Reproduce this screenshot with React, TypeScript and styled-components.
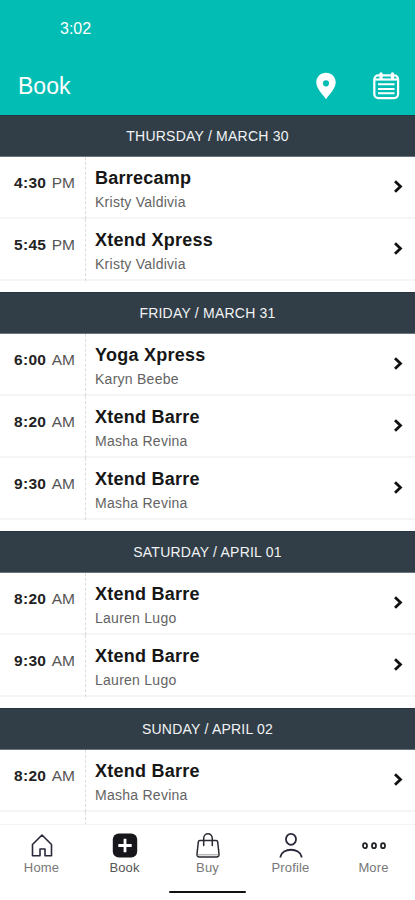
import React from "react";
import styled, {createGlobalStyle} from "styled-components";

interface IClass {
    time: string,
    period: string,
    title: string,
    instructor: string
}

interface IDay {
    label: string,
    classes: IClass[],
    hasMore?: boolean
}

const days: IDay[] = [
    {
        label: "THURSDAY / MARCH 30",
        classes: [
            {time: "4:30", period: "PM", title: "Barrecamp", instructor: "Kristy Valdivia"},
            {time: "5:45", period: "PM", title: "Xtend Xpress", instructor: "Kristy Valdivia"},
        ]
    },
    {
        label: "FRIDAY / MARCH 31",
        classes: [
            {time: "6:00", period: "AM", title: "Yoga Xpress", instructor: "Karyn Beebe"},
            {time: "8:20", period: "AM", title: "Xtend Barre", instructor: "Masha Revina"},
            {time: "9:30", period: "AM", title: "Xtend Barre", instructor: "Masha Revina"},
        ]
    },
    {
        label: "SATURDAY / APRIL 01",
        classes: [
            {time: "8:20", period: "AM", title: "Xtend Barre", instructor: "Lauren Lugo"},
            {time: "9:30", period: "AM", title: "Xtend Barre", instructor: "Lauren Lugo"},
        ]
    },
    {
        label: "SUNDAY / APRIL 02",
        classes: [
            {time: "8:20", period: "AM", title: "Xtend Barre", instructor: "Masha Revina"},
        ],
        hasMore: true
    },
];

const GlobalStyle = createGlobalStyle`
  * {
    box-sizing: border-box;
  }

  body {
    margin: 0;
    background: #fff;
    font-family: "Liberation Sans", Arial, sans-serif;
  }
`;

const Screen = styled.div`
  width: 100%;
  height: 900px;
  display: flex;
  flex-direction: column;
  overflow: hidden;
`;

const Header = styled.header`
  flex: none;
  height: 115px;
  background: #02bdb4;
  color: #fff;
`;

const StatusBar = styled.div`
  height: 56px;
  padding: 20px 0 0 60px;
  font-size: 16px;
  line-height: 18px;
`;

const TitleBar = styled.div`
  height: 59px;
  padding: 0 15px 0 18px;
  display: flex;
  align-items: center;
`;

const Title = styled.h1`
  flex: 1;
  margin: 0;
  font-size: 23px;
  font-weight: 400;
  line-height: 26px;
`;

const HeaderIcons = styled.div`
  display: flex;
  gap: 36px;
  align-items: center;

  svg {
    display: block;
  }
`;

const Schedule = styled.main`
  flex: 1;
  min-height: 0;
  overflow: hidden;
`;

const Day = styled.section`
  margin-bottom: 11px;
`;

const DayLabel = styled.h2`
  height: 42px;
  margin: 0;
  background: #313e48;
  border-top: 1px solid #253543;
  border-bottom: 1px solid #6b747c;
  color: #f1f3f5;
  font-size: 14px;
  font-weight: 400;
  letter-spacing: 0.22px;
  line-height: 40px;
  text-align: center;
`;

const Row = styled.div`
  height: 62px;
  display: flex;
  border-bottom: 2px solid #f5f5f5;
`;

const Time = styled.div`
  width: 86px;
  height: 62px;
  padding: 16px 10px 0 14px;
  display: flex;
  justify-content: space-between;
  border-right: 1px dashed #dcdcdc;
  color: #555;
  font-size: 15.5px;
  line-height: 20px;

  b {
    color: #222;
    letter-spacing: 0.3px;
  }
`;

const Details = styled.div`
  flex: 1;
  padding: 10px 0 0 9px;
`;

const ClassName = styled.div`
  color: #161616;
  font-size: 18px;
  font-weight: 700;
  letter-spacing: 0.25px;
  line-height: 22px;
`;

const Instructor = styled.div`
  margin-top: 5px;
  color: #636363;
  font-size: 14px;
  letter-spacing: 0.26px;
  line-height: 16px;
`;

const Chevron = styled.svg`
  width: 10px;
  height: 14px;
  margin: 22px 12px 0 0;
`;

const TabBar = styled.nav`
  flex: none;
  height: 58px;
  display: grid;
  grid-template-columns: repeat(5, 1fr);
  border-top: 1px solid #f4f4f4;
  background: #fff;
`;

const Tab = styled.div<{ $active?: boolean }>`
  display: flex;
  flex-direction: column;
  align-items: center;
  padding-top: 6px;
  color: ${props => props.$active ? "#555" : "#777"};
  font-size: 13px;
  letter-spacing: 0.15px;
  line-height: 15px;

  svg {
    display: block;
    margin-bottom: 1px;
  }
`;

const HomeIndicator = styled.div`
  flex: none;
  width: 77px;
  height: 2px;
  margin: 9px auto 7px;
  border-radius: 1px;
  background: #111;
`;

const PinIcon = () => (
    <svg width="20" height="28" viewBox="0 0 20 28">
        <path fill="#fff" fillRule="evenodd"
              d="M10 .8C4.500 .8 .3 5 .3 10.300C.3 16.500 6 21.500 10 27.200C14 21.500 19.700 16.500 19.700 10.300C19.700 5 15.500 .8 10 .8ZM10 8.200A3.100 3.100 0 1 1 10 14.400A3.100 3.100 0 1 1 10 8.200Z"/>
    </svg>
);

const CalendarIcon = () => (
    <svg width="28" height="28" viewBox="0 0 28 28" fill="none" stroke="#fff" strokeWidth="2.200">
        <rect x="2.300" y="3.300" width="23.800" height="22.800" rx="4"/>
        <path d="M2 7.500H26" strokeWidth="2.200"/>
        <path d="M9 2V5.500M20.500 2V5.500" strokeWidth="3.400" strokeLinecap="round"/>
        <path d="M6 12.300H22.500M6 17H22.500M6 21.300H22.500" strokeWidth="2"/>
    </svg>
);

const HomeIcon = () => (
    <svg width="26" height="28" viewBox="0 0 26 28" fill="none" stroke="#29293b" strokeWidth="1.600">
        <path d="M3.500 13.500L13 4L22.500 13.500V24.700H16V18H11V24.700H3.500Z" strokeLinejoin="round"/>
    </svg>
);

const BookIcon = () => (
    <svg width="26" height="28" viewBox="0 0 26 28">
        <rect x="0.800" y="2.500" width="24.400" height="24" rx="6" fill="#17171b"/>
        <path d="M13 7.800V21.200M6.300 14.500H19.700" stroke="#fff" strokeWidth="2.800"/>
    </svg>
);

const BuyIcon = () => (
    <svg width="26" height="28" viewBox="0 0 26 28" fill="none" stroke="#29292f" strokeWidth="1.500">
        <path d="M4.800 9.500H21.200C22 9.500 22.500 10 22.700 11L24 23C24.200 25 23.200 26 21.500 26H4.500C2.800 26 1.800 25 2 23L3.300 11C3.500 10 4 9.500 4.800 9.500Z"/>
        <path d="M2.500 23.800H23.500" strokeWidth="1" stroke="#999"/>
        <path d="M8.700 14.500V7.500C8.700 1.300 17.300 1.300 17.300 7.500V14.500" strokeLinecap="round"/>
    </svg>
);

const ProfileIcon = () => (
    <svg width="26" height="28" viewBox="0 0 26 28" fill="none" stroke="#29293b" strokeWidth="1.800">
        <ellipse cx="13" cy="8.300" rx="5" ry="5.500"/>
        <path d="M2.500 26.500V25.500C4 16.500 22 16.500 23.500 25.500V26.500"/>
    </svg>
);

const MoreIcon = () => (
    <svg width="26" height="28" viewBox="0 0 26 28" fill="none" stroke="#222228" strokeWidth="1.800">
        <ellipse cx="4" cy="14.700" rx="2" ry="2.500"/>
        <ellipse cx="13" cy="14.700" rx="2" ry="2.500"/>
        <ellipse cx="22" cy="14.700" rx="2" ry="2.500"/>
    </svg>
);

const tabs = [
    {label: "Home", icon: <HomeIcon/>},
    {label: "Book", icon: <BookIcon/>, active: true},
    {label: "Buy", icon: <BuyIcon/>},
    {label: "Profile", icon: <ProfileIcon/>},
    {label: "More", icon: <MoreIcon/>},
];

const ClassRow = (props: IClass) => (
    <Row>
        <Time><b>{props.time}</b><span>{props.period}</span></Time>
        <Details>
            <ClassName>{props.title}</ClassName>
            <Instructor>{props.instructor}</Instructor>
        </Details>
        <Chevron viewBox="0 0 10 14" fill="none" stroke="#111" strokeWidth="2.800">
            <path d="M2 2.200L7.500 7.500L2 12.800"/>
        </Chevron>
    </Row>
);

const App = () => {
    return <Screen>
        <GlobalStyle/>
        <Header>
            <StatusBar>3:02</StatusBar>
            <TitleBar>
                <Title>Book</Title>
                <HeaderIcons>
                    <PinIcon/>
                    <CalendarIcon/>
                </HeaderIcons>
            </TitleBar>
        </Header>

        <Schedule>
            {days.map(day =>
                <Day key={day.label}>
                    <DayLabel>{day.label}</DayLabel>
                    {day.classes.map(item => <ClassRow key={item.time} {...item}/>)}
                    {day.hasMore && <Row><Time/></Row>}
                </Day>
            )}
        </Schedule>

        <TabBar>
            {tabs.map(tab =>
                <Tab key={tab.label} $active={tab.active}>
                    {tab.icon}
                    {tab.label}
                </Tab>
            )}
        </TabBar>
        <HomeIndicator/>
    </Screen>;
};

export default App;
